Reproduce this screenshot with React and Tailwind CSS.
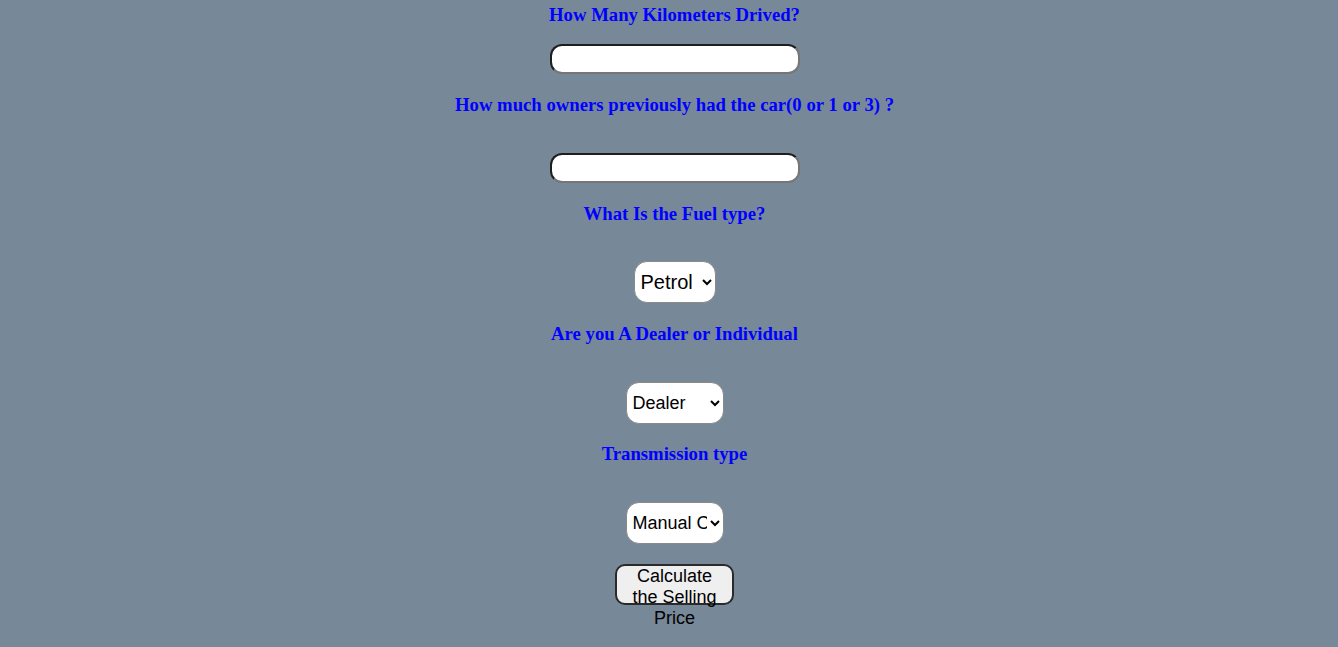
export default function App() {
  const label = "font-['Liberation_Serif',serif] font-bold text-[18.72px] leading-[22px] text-[#0000ff] text-center";
  const input = "w-[250px] h-[30px] bg-white rounded-[12px] border-2 border-t-[#1e1e1e] border-l-[#1e1e1e] border-b-[#767676] border-r-[#767676] outline-none";
  const select = "h-[42px] bg-white rounded-[13px] border border-[#8a8a8a] text-black font-['Liberation_Sans',Arial,sans-serif] outline-none";
  return (
    <div className="w-[1338px] h-[647px] bg-[#778899] overflow-hidden flex flex-col items-center pl-[11px]">
      <div className={label + " mt-[4px]"}>How Many Kilometers Drived?</div>
      <input type="text" className={input + " mt-[18px]"} />
      <div className={label + " mt-[20px]"}>How much owners previously had the car(0 or 1 or 3) ?</div>
      <input type="text" className={input + " mt-[37px]"} />
      <div className={label + " mt-[20px]"}>What Is the Fuel type?</div>
      <select className={select + " mt-[36px] w-[82px] text-[20px] pl-[2px]"} defaultValue="Petrol">
        <option>Petrol</option>
        <option>Diesel</option>
        <option>CNG</option>
      </select>
      <div className={label + " mt-[20px]"}>Are you A Dealer or Individual</div>
      <select className={select + " mt-[37px] w-[98px] text-[18px] pl-[2px]"} defaultValue="Dealer">
        <option>Dealer</option>
        <option>Individual</option>
      </select>
      <div className={label + " mt-[19px]"}>Transmission type</div>
      <select className={select + " mt-[37px] w-[98px] text-[18px] pl-[2px]"} defaultValue="Manual Car">
        <option>Manual Car</option>
        <option>Automatic Car</option>
      </select>
      <button className="mt-[20px] w-[119px] h-[41px] bg-[#efefef] rounded-[10px] border-2 border-[#2a2a2a] font-['Liberation_Sans',Arial,sans-serif] text-[18px] leading-[21px] text-black flex flex-col items-center justify-start overflow-visible">
        <span className="block px-[14px]">Calculate the Selling Price</span>
      </button>
    </div>
  );
}
